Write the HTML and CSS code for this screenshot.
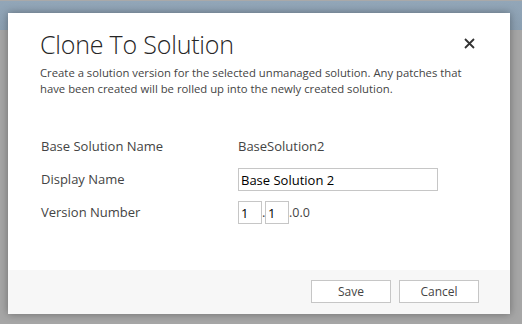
FILE: index.html
```html
<!DOCTYPE html>
<html lang="en">
<head>
    <meta charset="UTF-8">
    <title>Clone To Solution</title>
    <link rel="stylesheet" href="styles.css">
</head>
<body>
    <div class="app-bar"></div>

    <!-- modal dialog -->
    <div class="dialog">
        <div class="dialog-body">
            <div class="dialog-head">
                <h1>Clone To Solution</h1>
                <button class="close" aria-label="Close">
                    <svg width="11" height="11" viewBox="0 0 11 11">
                        <path d="M1 1 L10 10 M10 1 L1 10" stroke="#333" stroke-width="1.8"/>
                    </svg>
                </button>
            </div>
            <p class="desc">Create a solution version for the selected unmanaged solution. Any patches that have been created will be rolled up into the newly created solution.</p>

            <div class="form">
                <div class="label">Base Solution Name</div>
                <div class="value">BaseSolution2</div>

                <div class="label">Display Name</div>
                <div class="value"><input class="text-input" type="text" value="Base Solution 2"></div>

                <div class="label">Version Number</div>
                <div class="value version">
                    <input class="ver-input" type="text" value="1"><span class="dot">.</span><input class="ver-input" type="text" value="1"><span class="rest">.0.0</span>
                </div>
            </div>
        </div>
        <div class="dialog-foot">
            <button class="btn">Save</button>
            <button class="btn">Cancel</button>
        </div>
    </div>
</body>
</html>
```

FILE: styles.css
```css
body {
    margin: 0;
    padding: 0;
    height: 324px;
    background-color: #a6a6a6;
    font-family: "Open Sans", "Noto Sans", sans-serif;
    position: relative;
    overflow: hidden;
}

.app-bar {
    height: 29px;
    border-top: 1px solid #a9a9a9;
    background: linear-gradient(#92a6b8, #8b9fb1);
}

.dialog {
    position: absolute;
    left: 8px;
    top: 13px;
    width: 502px;
    height: 301px;
    background-color: white;
    box-shadow: 0 0 8px rgba(0, 0, 0, 0.35);
    display: flex;
    flex-direction: column;
}

.dialog-body {
    flex: 1;
    padding: 0 32px 0 32px;
}

.dialog-head {
    display: flex;
    justify-content: space-between;
    align-items: flex-start;
}

h1 {
    margin: 14px 0 0 0;
    font-weight: 300;
    font-size: 25px;
    letter-spacing: -0.2px;
    line-height: 34px;
    color: #262626;
}

.close {
    border: none;
    background: none;
    padding: 0;
    margin: 24px 3px 0 0;
    cursor: pointer;
}

.desc {
    margin: 4px 0 0 0;
    font-size: 11.3px;
    line-height: 16px;
    color: #444;
}

.form {
    display: grid;
    grid-template-columns: 197px 1fr;
    row-gap: 10px;
    margin-top: 38px;
    padding-left: 1px;
    font-size: 13px;
    color: #444;
    align-items: center;
}

.label {
    height: 23px;
    line-height: 23px;
}

.value {
    height: 23px;
    line-height: 23px;
}

.text-input {
    box-sizing: border-box;
    width: 200px;
    height: 23px;
    border: 1px solid #c6c6c6;
    padding: 0 2px;
    font-family: inherit;
    font-size: 13px;
    color: #000;
    outline: none;
}

.version {
    display: flex;
    align-items: center;
}

.ver-input {
    box-sizing: border-box;
    width: 24px;
    height: 23px;
    border: 1px solid #c6c6c6;
    padding: 0 2px;
    font-family: inherit;
    font-size: 13px;
    color: #000;
    outline: none;
}

.dot {
    width: 3px;
    text-align: center;
}

.rest {
    font-size: 12.5px;
}

.dialog-foot {
    height: 44px;
    background-color: #f7f7f7;
    display: flex;
    justify-content: flex-end;
    align-items: flex-start;
    gap: 8px;
    padding: 10px 31px 0 0;
    box-sizing: border-box;
}

.btn {
    width: 80px;
    height: 23px;
    background-color: white;
    border: 1px solid #c6c6c6;
    font-family: inherit;
    font-size: 12px;
    color: #444;
    padding: 0;
    cursor: pointer;
}
```
